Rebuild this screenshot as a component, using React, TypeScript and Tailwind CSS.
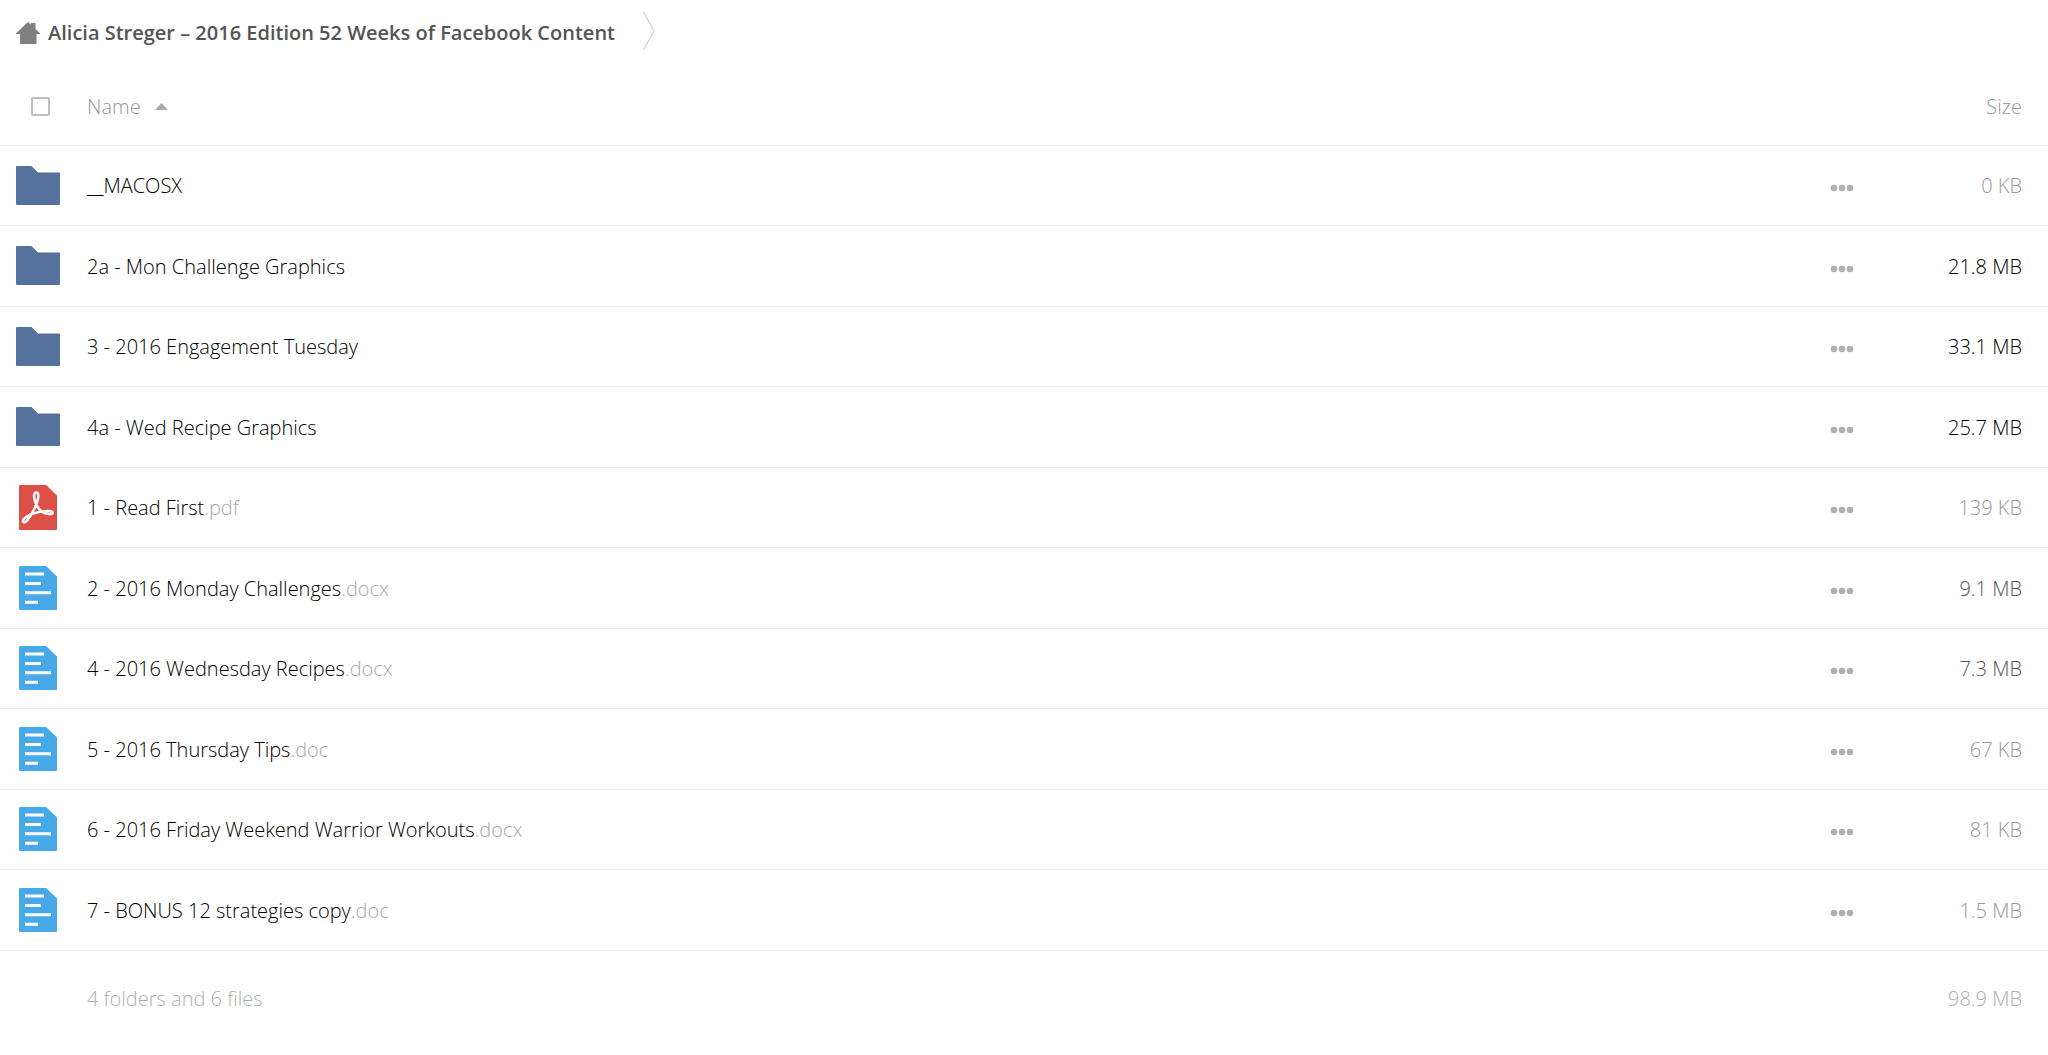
type Kind = 'folder' | 'pdf' | 'doc';
type Tone = 'dark' | 'mid' | 'light';

interface Entry {
  kind: Kind;
  name: string;
  ext?: string;
  size: string;
  tone: Tone;
}

const entries: Entry[] = [
  { kind: 'folder', name: '__MACOSX', size: '0 KB', tone: 'light' },
  { kind: 'folder', name: '2a - Mon Challenge Graphics', size: '21.8 MB', tone: 'dark' },
  { kind: 'folder', name: '3 - 2016 Engagement Tuesday', size: '33.1 MB', tone: 'dark' },
  { kind: 'folder', name: '4a - Wed Recipe Graphics', size: '25.7 MB', tone: 'dark' },
  { kind: 'pdf', name: '1 - Read First', ext: '.pdf', size: '139 KB', tone: 'light' },
  { kind: 'doc', name: '2 - 2016 Monday Challenges', ext: '.docx', size: '9.1 MB', tone: 'mid' },
  { kind: 'doc', name: '4 - 2016 Wednesday Recipes', ext: '.docx', size: '7.3 MB', tone: 'mid' },
  { kind: 'doc', name: '5 - 2016 Thursday Tips', ext: '.doc', size: '67 KB', tone: 'light' },
  { kind: 'doc', name: '6 - 2016 Friday Weekend Warrior Workouts', ext: '.docx', size: '81 KB', tone: 'light' },
  { kind: 'doc', name: '7 - BONUS 12 strategies copy', ext: '.doc', size: '1.5 MB', tone: 'light' },
];

const toneClass: Record<Tone, string> = {
  dark: 'text-black',
  mid: 'text-[#555555]',
  light: 'text-[#999999]',
};

function FolderIcon() {
  return (
    <svg width="44" height="39" viewBox="0 0 44 39" fill="#54729b" aria-hidden="true">
      <path d="M1 0H15.5L22 6.5H43a1 1 0 0 1 1 1V38a1 1 0 0 1-1 1H1a1 1 0 0 1-1-1V1a1 1 0 0 1 1-1Z" />
    </svg>
  );
}

function PdfIcon() {
  return (
    <svg width="38" height="45" viewBox="0 0 38 45" aria-hidden="true">
      <path d="M1 0H27L38 10.5V44a1 1 0 0 1-1 1H1a1 1 0 0 1-1-1V1a1 1 0 0 1 1-1Z" fill="#dc5047" />
      <path
        d="M17.2 7.4c2.9 0 2.5 5 .9 9.600-2.300 6.600-6.400 14.400-9.900 18.400-1.600 1.900-4 2.600-4.300.9-.4-2.200 4.300-5.500 8.700-7.200 5.900-2.300 13.200-3.500 18.200-3.100 4.200.4 3.700 3.400-.4 3.100-5.400-.4-10.900-4.100-13.600-10.700-1.800-4.400-2.800-11 .4-11Z"
        fill="none"
        stroke="#fff"
        strokeWidth="2.5"
      />
    </svg>
  );
}

function DocIcon() {
  return (
    <svg width="38" height="44" viewBox="0 0 38 44" aria-hidden="true">
      <path d="M1 0H27L38 10.5V43a1 1 0 0 1-1 1H1a1 1 0 0 1-1-1V1a1 1 0 0 1 1-1Z" fill="#48a9ea" />
      <path d="M6 6.500h19v3H6zM6 16h16v3H6zM6 25.300h26v3H6zM6 34.700h13v3H6z" fill="#fff" />
    </svg>
  );
}

function EntryIcon({ kind }: { kind: Kind }) {
  if (kind === 'folder') return <FolderIcon />;
  if (kind === 'pdf') return <PdfIcon />;
  return <DocIcon />;
}

function Breadcrumb() {
  return (
    <nav aria-label="Breadcrumb" className="flex h-[65px] items-center pl-4">
      <a href="#" className="flex items-center gap-2 font-semibold text-[#555555]">
        <svg width="24" height="22" viewBox="0 0 24 22" fill="#808080" aria-hidden="true">
          <path d="M12 0L15 2.700V1h4.500v6L24 11.300v.7H20.500V22H4V12H0v-.7Z" />
        </svg>
        Alicia Streger – 2016 Edition 52 Weeks of Facebook Content
      </a>
      <svg className="mb-1 ml-7" width="12" height="38" viewBox="0 0 12 38" fill="none" aria-hidden="true">
        <path d="M.5 0L11 19L.5 38" stroke="#d4d4d4" strokeWidth="1.3" />
      </svg>
    </nav>
  );
}

function EntryRow({ entry }: { entry: Entry }) {
  return (
    <tr className="border-b border-[#ebebeb] odd:h-20 even:h-[81px]">
      <td>
        <div className="flex w-[76px] justify-center">
          <EntryIcon kind={entry.kind} />
        </div>
      </td>
      <td className="pt-0.5">
        <a href="#" className="text-black">
          {entry.name}
          {entry.ext && <span className="text-[#aaaaaa]">{entry.ext}</span>}
        </a>
      </td>
      <td>
        <button type="button" aria-label={`More actions for ${entry.name}`} className="flex cursor-pointer pt-1.5">
          <svg width="24" height="8" viewBox="0 0 24 8" fill="#b0b0b0" aria-hidden="true">
            <circle cx="4" cy="4" r="3.300" />
            <circle cx="12" cy="4" r="3.300" />
            <circle cx="20" cy="4" r="3.300" />
          </svg>
        </button>
      </td>
      <td className={`pt-0.5 pr-[26px] text-right ${toneClass[entry.tone]}`}>{entry.size}</td>
    </tr>
  );
}

export default function App() {
  return (
    <main className="min-h-screen bg-[#fefefe] font-['Open_Sans','Noto_Sans',sans-serif] text-[20px] leading-7">
      <Breadcrumb />
      <table className="w-full table-fixed border-collapse font-light">
        <colgroup>
          <col className="w-[87px]" />
          <col />
          <col className="w-[58px]" />
          <col className="w-[160px]" />
        </colgroup>
        <thead>
          <tr className="h-20 border-b border-[#ebebeb] text-[#999999]">
            <th className="pt-1 pl-[31px] text-left">
              <input
                type="checkbox"
                aria-label="Select all"
                className="block size-[19px] appearance-none rounded-xs border-2 border-[#bdbdbd]"
              />
            </th>
            <th className="pt-1 text-left font-light" aria-sort="ascending">
              <button type="button" className="flex cursor-pointer items-center gap-3.5">
                Name
                <svg width="13" height="7" viewBox="0 0 13 7" fill="#aaaaaa" aria-hidden="true">
                  <path d="M6.5 0L13 7H0Z" />
                </svg>
              </button>
            </th>
            <td />
            <th className="pt-1 pr-[26px] text-right font-light">Size</th>
          </tr>
        </thead>
        <tbody>
          {entries.map((entry) => (
            <EntryRow key={entry.name} entry={entry} />
          ))}
        </tbody>
        <tfoot>
          <tr className="h-24 text-[#b0b0b0]">
            <td />
            <td className="pt-0.5">4 folders and 6 files</td>
            <td />
            <td className="pt-0.5 pr-[26px] text-right">98.9 MB</td>
          </tr>
        </tfoot>
      </table>
    </main>
  );
}
